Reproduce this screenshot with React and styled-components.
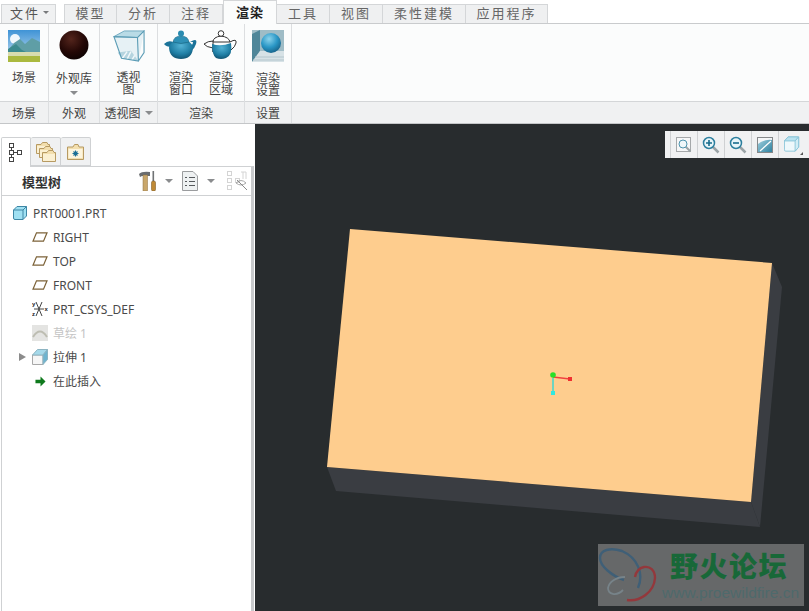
import React from 'react';
import styled, { createGlobalStyle } from 'styled-components';

const GlobalStyle = createGlobalStyle`
  html, body { margin: 0; padding: 0; background: #fff; overflow: hidden; }
  body { font-family: "Noto Sans CJK SC", "Liberation Sans", sans-serif; font-size: 12px; color: #444; }
`;

const Page = styled.div`
  width: 809px;
  height: 611px;
  display: flex;
  flex-direction: column;
  overflow: hidden;
`;

const TabBar = styled.div`
  height: 24px;
  box-sizing: border-box;
  display: flex;
  align-items: flex-end;
  padding-left: 1px;
  background: #fff;
  border-bottom: 1px solid #c9cbcd;
`;

const FileButton = styled.div`
  width: 55px;
  height: 19px;
  box-sizing: border-box;
  margin-right: 8px;
  padding: 0 0 3px 2px;
  background: #f0f1f2;
  border: 1px solid #d4d6d8;
  border-bottom: none;
  display: flex;
  align-items: center;
  justify-content: center;
  gap: 3px;
  font-size: 13px;
  letter-spacing: 2px;
  color: #555;
`;

const FileCaret = styled.span`
  width: 0;
  height: 0;
  border-left: 3px solid transparent;
  border-right: 3px solid transparent;
  border-top: 3px solid #77797b;
`;

const Tab = styled.div`
  width: ${p => p.$w || 53}px;
  height: ${p => (p.$active ? 24 : 19)}px;
  box-sizing: border-box;
  margin-bottom: ${p => (p.$active ? -1 : 0)}px;
  padding-bottom: ${p => (p.$active ? 2 : 3)}px;
  display: flex;
  align-items: center;
  justify-content: center;
  font-size: 13px;
  letter-spacing: ${p => (p.$active ? 1 : 2)}px;
  font-weight: ${p => (p.$active ? 700 : 400)};
  color: ${p => (p.$active ? '#222' : '#666')};
  background: ${p => (p.$active ? '#fbfcfc' : '#eff0f1')};
  border: 1px solid #d4d6d8;
  border-left: ${p => (p.$first || p.$active ? '1px solid #d4d6d8' : 'none')};
  border-bottom: none;
`;

const Ribbon = styled.div`
  height: 100px;
  box-sizing: border-box;
  display: flex;
  background: #fbfcfc;
  border-bottom: 1px solid #c4c6c8;
`;

const Group = styled.div`
  width: ${p => (p.$w ? `${p.$w}px` : 'auto')};
  flex: ${p => (p.$w ? 'none' : 1)};
  box-sizing: border-box;
  display: flex;
  flex-direction: column;
  border-right: ${p => (p.$w ? '1px solid #dcdee0' : 'none')};
`;

const GroupBody = styled.div`
  height: 77px;
  display: flex;
  justify-content: center;
`;

const GroupLabel = styled.div`
  height: 22px;
  box-sizing: border-box;
  background: #f0f1f2;
  border-top: 1px solid #d4d6d8;
  display: flex;
  align-items: center;
  justify-content: center;
  gap: 4px;
  color: #444;
  font-size: 12px;
`;

const ToolButton = styled.div`
  width: ${p => p.$w || 40}px;
  display: flex;
  flex-direction: column;
  align-items: center;
  padding-top: 6px;
`;

const ToolText = styled.div`
  margin-top: ${p => p.$mt || 8}px;
  font-size: 12px;
  line-height: 12px;
  text-align: center;
  color: #444;
  white-space: pre-line;
`;

const Caret = styled.span`
  display: inline-block;
  flex: none;
  width: 0;
  height: 0;
  margin-top: ${p => p.$mt || 0}px;
  margin-left: ${p => p.$ml || 0}px;
  margin-right: ${p => p.$mr || 0}px;
  border-left: 4px solid transparent;
  border-right: 4px solid transparent;
  border-top: 4px solid #8a8c8e;
`;

const Main = styled.div`
  flex: 1;
  display: flex;
  min-height: 0;
`;

const Sidebar = styled.div`
  width: 255px;
  flex: none;
  box-sizing: border-box;
  background: #fff;
  padding: 13px 1px 0 1px;
  display: flex;
  flex-direction: column;
`;

const PanelTabs = styled.div`
  height: 29px;
  display: flex;
`;

const PanelTab = styled.div`
  width: 30px;
  height: ${p => (p.$active ? 30 : 29)}px;
  box-sizing: border-box;
  background: ${p => (p.$active ? '#fff' : '#f0f1f2')};
  border: 1px solid #cfd1d3;
  border-left: ${p => (p.$active ? '1px solid #cfd1d3' : 'none')};
  border-bottom: ${p => (p.$active ? 'none' : '1px solid #cfd1d3')};
  border-radius: 2px 2px 0 0;
  position: relative;
  z-index: ${p => (p.$active ? 1 : 0)};
  display: flex;
  align-items: center;
  justify-content: center;
`;

const Panel = styled.div`
  flex: 1;
  border: 1px solid #cfd1d3;
  border-bottom: none;
  border-right: 3px solid #c8cacc;
  display: flex;
  flex-direction: column;
`;

const TreeHeader = styled.div`
  height: 29px;
  box-sizing: border-box;
  display: flex;
  align-items: center;
  padding-left: 20px;
  border-bottom: 1px solid #cfd1d3;
`;

const TreeTitle = styled.div`
  font-size: 13px;
  font-weight: 700;
  color: #333;
  width: 117px;
`;

const HeaderTools = styled.div`
  display: flex;
  align-items: center;
`;

const TreeList = styled.div`
  padding-top: 5px;
  display: flex;
  flex-direction: column;
`;

const TreeRow = styled.div`
  height: 24px;
  display: flex;
  align-items: center;
  padding-left: ${p => p.$indent}px;
  font-family: "Noto Sans", "Noto Sans CJK SC", sans-serif;
  font-size: 12px;
  color: ${p => (p.$muted ? '#c4c4c4' : '#4a4a4a')};
`;

const IconSlot = styled.span`
  width: 16px;
  height: 16px;
  flex: none;
  margin-right: 5px;
  display: flex;
  align-items: center;
  justify-content: center;
`;

const ExpanderSlot = styled.span`
  width: 15px;
  margin-left: -15px;
  flex: none;
`;

const Expander = styled.span`
  display: block;
  width: 0;
  height: 0;
  margin-left: 2px;
  border-top: 4px solid transparent;
  border-bottom: 4px solid transparent;
  border-left: 7px solid #8b8b8b;
`;

const Viewport = styled.div`
  flex: 1;
  position: relative;
  background: #282c2e;
  overflow: hidden;
`;

const ModelSvg = styled.svg`
  display: block;
  width: 100%;
  height: 100%;
`;

const ViewToolbar = styled.div`
  position: absolute;
  top: 7px;
  right: 0;
  width: 144px;
  height: 27px;
  box-sizing: border-box;
  display: flex;
  background: #f0f1f2;
  padding-left: 5px;
`;

const ViewTool = styled.div`
  width: ${p => p.$w || 27}px;
  height: 27px;
  box-sizing: border-box;
  padding-right: ${p => p.$pr || 0}px;
  border-left: 1px solid #cfd1d3;
  display: flex;
  align-items: center;
  justify-content: center;
  position: relative;
`;

const CornerMark = styled.span`
  position: absolute;
  right: 6px;
  bottom: 3px;
  width: 0;
  height: 0;
  border-left: 3px solid transparent;
  border-bottom: 3px solid #555;
`;

const Watermark = styled.div`
  position: absolute;
  left: 343px;
  top: 420px;
  width: 206px;
  height: 62px;
  background: #666869;
  display: flex;
`;

const MarkLogo = styled.svg`
  width: 62px;
  height: 62px;
  flex: none;
`;

const MarkText = styled.div`
  display: flex;
  flex-direction: column;
  align-items: flex-end;
  flex: 1;
  padding-right: 5px;
`;

const MarkTitle = styled.div`
  font-size: 28px;
  line-height: 30px;
  margin-top: 6px;
  margin-right: 11px;
  font-weight: 900;
  letter-spacing: 1.5px;
  color: #186838;
  white-space: nowrap;
`;

const MarkUrl = styled.div`
  font-family: "Liberation Sans", sans-serif;
  font-size: 15.5px;
  line-height: 18px;
  margin-top: 4px;
  color: #4e6a6c;
  white-space: nowrap;
`;

const SceneIcon = () => (
  <svg width="32" height="32" viewBox="0 0 32 32">
    <defs>
      <linearGradient id="sky" x1="0" y1="0" x2="0" y2="1">
        <stop offset="0" stopColor="#3f93d6" />
        <stop offset="1" stopColor="#cfe6f2" />
      </linearGradient>
    </defs>
    <rect width="32" height="32" fill="url(#sky)" />
    <circle cx="7" cy="9" r="5" fill="#fff" opacity="0.9" />
    <path d="M0 20 L6 13 L12 9 L17 14 L24 8 L32 12 V23 H0Z" fill="#5f9ea6" />
    <path d="M0 19 L8 14 L14 20 L20 23 H0Z" fill="#3c8a8e" />
    <rect y="22" width="32" height="5" fill="#d8dcae" />
    <rect y="26" width="32" height="6" fill="#aab93f" />
  </svg>
);

const AppearanceIcon = () => (
  <svg width="30" height="30" viewBox="0 0 30 30">
    <defs>
      <radialGradient id="ball" cx="0.4" cy="0.3" r="0.75">
        <stop offset="0" stopColor="#54251c" />
        <stop offset="0.6" stopColor="#240806" />
        <stop offset="1" stopColor="#0c0202" />
      </radialGradient>
    </defs>
    <circle cx="15" cy="15" r="14.5" fill="url(#ball)" />
  </svg>
);

const PerspectiveIcon = () => (
  <svg width="32" height="32" viewBox="0 0 34 34">
    <path d="M1 7 L12 1 L33 1 L27 33 L9 30Z" fill="#e6f1f5" />
    <path d="M1 7 L26 8 L33 1 L12 1Z" fill="#b9dbe6" stroke="#6fa9bf" strokeWidth="1" />
    <path d="M5 24 L19 22 L27 33 L9 30Z" fill="#b5d4df" />
    <path d="M10 30 L15 23 M15 31 L19 23 M20 32 L23 27" stroke="#f2f8fa" strokeWidth="1.5" />
    <path d="M1 7 L26 8 L27 33 L9 30Z M26 8 L33 1 L33 24 L27 33" fill="none" stroke="#5c9db6" strokeWidth="1.2" />
  </svg>
);

const TeapotIcon = ({ half }) => (
  <svg width="34" height="30" viewBox="0 0 34 30">
    <defs>
      <radialGradient id="pot" cx="0.5" cy="0.3" r="0.75">
        <stop offset="0" stopColor="#53b2d4" />
        <stop offset="0.6" stopColor="#1f7ea4" />
        <stop offset="1" stopColor="#0e4c69" />
      </radialGradient>
    </defs>
    {half ? (
      <g>
        <path d="M9 18 Q2 17 0 14 Q4 11 9 11 L9 22Z M26 12 Q33 8 32 13 Q31 17 27 20" fill="#fff" stroke="#333" strokeWidth="1" />
        <path d="M9 12 Q9 7 17 6 Q25 7 26 12Z" fill="#fff" stroke="#333" strokeWidth="1" />
        <circle cx="17" cy="3.5" r="2.8" fill="#fff" stroke="#333" strokeWidth="1" />
        <path d="M8 14 Q17 17 27 13 Q29 25 22 28 Q17 30 12 28 Q8 25 8 14Z" fill="url(#pot)" />
      </g>
    ) : (
      <g>
        <path d="M8 17 Q2 17 0 14 Q4 10 9 12Z M26 12 Q34 7 32 14 Q31 18 27 21 L25 18 Q29 15 29 12Z" fill="#1b7399" />
        <path d="M5 18 Q6 10 17 10 Q28 10 29 18 Q28 29 17 29 Q6 29 5 18Z" fill="url(#pot)" />
        <path d="M9 12 Q10 6 17 6 Q24 6 25 12 Q17 15 9 12Z" fill="#2e90b6" stroke="#125873" strokeWidth="0.5" />
        <circle cx="17" cy="3.5" r="3" fill="#2a8bb0" />
      </g>
    )}
  </svg>
);

const RenderSetIcon = () => (
  <svg width="32" height="32" viewBox="0 0 32 32">
    <defs>
      <radialGradient id="sph" cx="0.4" cy="0.3" r="0.75">
        <stop offset="0" stopColor="#8bd3ec" />
        <stop offset="0.55" stopColor="#2a97c6" />
        <stop offset="1" stopColor="#155f85" />
      </radialGradient>
    </defs>
    <rect width="32" height="32" fill="#9fbcc6" />
    <path d="M0 4 L8 0 V21 L0 32Z" fill="#4f8699" />
    <path d="M0 32 L8 21 H32 V32Z" fill="#d7e2e6" />
    <path d="M3 27 H32 M1 30 H32" stroke="#b4c6cd" strokeWidth="1" />
    <circle cx="19" cy="13" r="10" fill="url(#sph)" />
  </svg>
);

const TreeTabIcon = () => (
  <svg width="14" height="20" viewBox="0 0 14 20" fill="#fff" stroke="#444" strokeWidth="1">
    <rect x="0.5" y="0.5" width="4" height="4" />
    <rect x="0.5" y="7.5" width="4" height="4" />
    <rect x="8.5" y="7.5" width="4" height="4" />
    <rect x="0.5" y="14.5" width="4" height="4" />
    <path d="M2.5 5 V7 M2.5 12 V14 M5 9.5 H8" fill="none" />
  </svg>
);

const FolderIcon = ({ x, y }) => (
  <g transform={`translate(${x} ${y})`}>
    <path d="M0.5 2.5 H5 L6.5 0.5 H11 L12 2.5 H13.5 V11.5 H0.5Z" fill="#f3dfae" stroke="#b79a62" />
    <rect x="1" y="4" width="12" height="7" fill="#fbf0d2" />
  </g>
);

const FoldersTabIcon = () => (
  <svg width="20" height="20" viewBox="0 0 20 20">
    <FolderIcon x={0} y={0} />
    <FolderIcon x={3} y={4} />
    <FolderIcon x={6} y={8} />
  </svg>
);

const StarFolderIcon = () => (
  <svg width="18" height="16" viewBox="0 0 18 16">
    <path d="M0.5 3 H6 L7.5 0.5 H11 L12 3 H16.5 V15.5 H0.5Z" fill="#f3dfae" stroke="#b79a62" />
    <rect x="1.5" y="5" width="14" height="9" fill="#fdf5de" />
    <path d="M8.5 6.5 V12.5 M5.5 9.5 H11.5 M6.5 7.5 L10.5 11.5 M10.5 7.5 L6.5 11.5" stroke="#1c6f95" strokeWidth="1.1" />
  </svg>
);

const ToolsIcon = () => (
  <svg width="18" height="20" viewBox="0 0 18 20">
    <path d="M0 3 Q3 0 11 1 V5 H3 L1 6Z" fill="#6a6d70" />
    <rect x="4" y="4" width="4.5" height="16" fill="#c9a76b" stroke="#8d7140" strokeWidth="0.5" />
    <rect x="13.5" y="0" width="1.6" height="10" fill="#707375" />
    <rect x="12.5" y="10" width="4" height="10" rx="1.5" fill="#c08a35" stroke="#6e4c18" strokeWidth="0.5" />
  </svg>
);

const SettingsListIcon = () => (
  <svg width="16" height="20" viewBox="0 0 16 20">
    <path d="M0.5 0.5 H11 L15.5 5 V19.5 H0.5Z" fill="#eef1f2" stroke="#9a9c9e" />
    <path d="M3 6.5 H5 M7 6.5 H13 M3 10.5 H5 M7 10.5 H13 M3 14.5 H5 M7 14.5 H13" stroke="#55595c" />
  </svg>
);

const HiddenTreeIcon = () => (
  <svg width="22" height="20" viewBox="0 0 22 20" fill="none" stroke="#d4d4d4">
    <rect x="0.5" y="0.5" width="4" height="4" />
    <rect x="0.5" y="7.5" width="4" height="4" />
    <rect x="8.5" y="7.5" width="4" height="4" />
    <rect x="0.5" y="14.5" width="4" height="4" />
    <path d="M14 1 H19 M16 1 V8 M19 1 V8" />
    <path d="M9 12 Q14 7 19 12 Q14 16 9 12Z" stroke="#a8a8a8" />
    <path d="M10 9 L20 19" stroke="#8a8a8a" />
  </svg>
);

const PartIcon = () => (
  <svg width="14" height="14" viewBox="0 0 14 14">
    <path d="M0.5 4 L4 0.5 H13.5 V10 L10 13.5 H2 Q0.5 13.5 0.5 12Z" fill="#9fe0f2" stroke="#3e86a5" />
    <path d="M0.5 4 H10 V13.5 M10 4 L13.5 0.5" fill="none" stroke="#3e86a5" />
  </svg>
);

const PlaneIcon = () => (
  <svg width="16" height="10" viewBox="0 0 16 10">
    <path d="M4.5 0.8 H15 L11.5 9.2 H1Z" fill="none" stroke="#7c6238" strokeWidth="1.2" />
  </svg>
);

const CsysIcon = () => (
  <svg width="16" height="16" viewBox="0 0 16 16" fill="none" stroke="#444" strokeWidth="1">
    <path d="M4 1 L10 15 M10 1 L4 15 M2 8 H12" />
    <text x="0" y="5" fontSize="6" fontFamily="Liberation Sans" fontWeight="700" fill="#222" stroke="none">y</text>
    <text x="0" y="15" fontSize="6" fontFamily="Liberation Sans" fontWeight="700" fill="#222" stroke="none">z</text>
    <text x="12.5" y="10" fontSize="6" fontFamily="Liberation Sans" fontWeight="700" fill="#222" stroke="none">x</text>
  </svg>
);

const SketchIcon = () => (
  <svg width="16" height="16" viewBox="0 0 16 16">
    <rect width="16" height="16" fill="#e4e4e2" />
    <path d="M1 12 Q8 1 15 12" fill="none" stroke="#bdbdb2" strokeWidth="2" />
  </svg>
);

const ExtrudeIcon = () => (
  <svg width="16" height="16" viewBox="0 0 16 16">
    <path d="M0.5 6 H11 V15.5 H0.5Z" fill="#f6f6f6" stroke="#a8a8a8" />
    <path d="M0.5 6 L5.5 0.5 H15.5 L11 6Z" fill="#a5d9ea" stroke="#8db4c2" />
    <path d="M11 6 L15.5 0.5 V10.5 L11 15.5Z" fill="#6fb4cf" stroke="#8db4c2" />
  </svg>
);

const InsertIcon = () => (
  <svg width="11" height="11" viewBox="0 0 12 12">
    <path d="M0.5 4 H6 V0.5 L11.5 6 L6 11.5 V8 H0.5Z" fill="#0f7a1d" />
  </svg>
);

const MagnifierIcon = ({ sign }) => (
  <svg width="18" height="18" viewBox="0 0 18 18">
    <path d="M10.5 10.5 L16.5 16.5" stroke="#9aa3a6" strokeWidth="2.5" />
    <circle cx="7" cy="7" r="5.5" fill="#e8f5f9" stroke="#2c7f9e" strokeWidth="1.5" />
    <path d={sign === '+' ? 'M4 7 H10 M7 4 V10' : 'M4 7 H10'} stroke="#176c8c" strokeWidth="1.6" />
  </svg>
);

const ZoomFrameIcon = () => (
  <svg width="16" height="16" viewBox="0 0 16 16">
    <rect x="0.5" y="0.5" width="14" height="14" fill="#f6f7f8" stroke="#a5a8aa" />
    <path d="M9.5 9.5 L14.5 14.5" stroke="#9aa3a6" strokeWidth="2" />
    <circle cx="7" cy="7" r="4" fill="#eef7fa" stroke="#4d93ae" />
  </svg>
);

const ShadeIcon = () => (
  <svg width="16" height="16" viewBox="0 0 16 16">
    <defs>
      <linearGradient id="shade" x1="0" y1="0" x2="1" y2="1">
        <stop offset="0" stopColor="#a9d6e4" />
        <stop offset="1" stopColor="#2b7f9d" />
      </linearGradient>
    </defs>
    <rect x="0.5" y="0.5" width="15" height="15" fill="url(#shade)" stroke="#85888a" />
    <path d="M1 1 H15 V3 Q7 2 1 7Z" fill="#f4f6f7" />
    <path d="M3 14 L14 4" stroke="#fff" strokeWidth="1.2" />
  </svg>
);

const ViewCubeIcon = () => (
  <svg width="16" height="17" viewBox="0 0 18 18">
    <path d="M0.5 5 L4.5 0.5 H16.5 V12 L12.5 16.5 H2 Q0.5 16.5 0.5 15Z" fill="#eef8fb" stroke="#86c3d8" />
    <path d="M0.5 5 L4.5 0.5 H16.5 L12.5 5Z" fill="#b8e2ef" stroke="#86c3d8" />
    <path d="M12.5 5 L16.5 0.5 V12 L12.5 16.5Z" fill="#d2edf5" stroke="#86c3d8" />
  </svg>
);

const treeItems = [
  { label: 'RIGHT', icon: <PlaneIcon /> },
  { label: 'TOP', icon: <PlaneIcon /> },
  { label: 'FRONT', icon: <PlaneIcon /> },
  { label: 'PRT_CSYS_DEF', icon: <CsysIcon /> },
  { label: '草绘 1', icon: <SketchIcon />, muted: true },
  { label: '拉伸 1', icon: <ExtrudeIcon />, expand: true },
  { label: '在此插入', icon: <InsertIcon /> },
];

function App() {
  return (
    <Page>
      <GlobalStyle />
      <TabBar>
        <FileButton>文件<FileCaret /></FileButton>
        <Tab $first>模型</Tab>
        <Tab>分析</Tab>
        <Tab>注释</Tab>
        <Tab $active $w={54}>渲染</Tab>
        <Tab>工具</Tab>
        <Tab>视图</Tab>
        <Tab $w={83}>柔性建模</Tab>
        <Tab $w={82}>应用程序</Tab>
      </TabBar>
      <Ribbon>
        <Group $w={49}>
          <GroupBody>
            <ToolButton><SceneIcon /><ToolText $mt={9}>场景</ToolText></ToolButton>
          </GroupBody>
          <GroupLabel>场景</GroupLabel>
        </Group>
        <Group $w={51}>
          <GroupBody>
            <ToolButton $w={50}>
              <AppearanceIcon />
              <ToolText $mt={12}>外观库</ToolText>
              <Caret $mt={7} />
            </ToolButton>
          </GroupBody>
          <GroupLabel>外观</GroupLabel>
        </Group>
        <Group $w={58}>
          <GroupBody>
            <ToolButton><PerspectiveIcon /><ToolText $mt={9}>{'透视\n图'}</ToolText></ToolButton>
          </GroupBody>
          <GroupLabel>透视图<Caret /></GroupLabel>
        </Group>
        <Group $w={87}>
          <GroupBody>
            <ToolButton><TeapotIcon /><ToolText $mt={11}>{'渲染\n窗口'}</ToolText></ToolButton>
            <ToolButton><TeapotIcon half /><ToolText $mt={11}>{'渲染\n区域'}</ToolText></ToolButton>
          </GroupBody>
          <GroupLabel>渲染</GroupLabel>
        </Group>
        <Group $w={47}>
          <GroupBody>
            <ToolButton><RenderSetIcon /><ToolText $mt={10}>{'渲染\n设置'}</ToolText></ToolButton>
          </GroupBody>
          <GroupLabel>设置</GroupLabel>
        </Group>
        <Group>
          <GroupBody />
          <GroupLabel />
        </Group>
      </Ribbon>
      <Main>
        <Sidebar>
          <PanelTabs>
            <PanelTab $active><TreeTabIcon /></PanelTab>
            <PanelTab><FoldersTabIcon /></PanelTab>
            <PanelTab><StarFolderIcon /></PanelTab>
          </PanelTabs>
          <Panel>
            <TreeHeader>
              <TreeTitle>模型树</TreeTitle>
              <HeaderTools>
                <ToolsIcon />
                <Caret $ml={8} $mr={9} />
                <SettingsListIcon />
                <Caret $ml={9} $mr={12} />
                <HiddenTreeIcon />
              </HeaderTools>
            </TreeHeader>
            <TreeList>
              <TreeRow $indent={10}><IconSlot><PartIcon /></IconSlot><span>PRT0001.PRT</span></TreeRow>
              {treeItems.map(item => (
                <TreeRow key={item.label} $indent={30} $muted={item.muted}>
                  {item.expand && <ExpanderSlot><Expander /></ExpanderSlot>}
                  <IconSlot>{item.icon}</IconSlot>
                  <span>{item.label}</span>
                </TreeRow>
              ))}
            </TreeList>
          </Panel>
        </Sidebar>
        <Viewport>
          <ModelSvg viewBox="0 0 554 487">
            <path d="M517 139 L527 163 L505 403 L496 378Z" fill="#3a3d42" />
            <path d="M72 343 L496 378 L505 403 L81 367Z" fill="#3a3d42" />
            <path d="M95 105 L517 139 L496 378 L72 343Z" fill="#fecd8e" />
            <path d="M298 254 V268" stroke="#3fd6d0" strokeWidth="1.5" />
            <path d="M298 253 L315 255" stroke="#f04040" strokeWidth="1.5" />
            <rect x="313" y="253" width="4" height="4" fill="#f03030" />
            <rect x="296" y="267" width="4" height="4" fill="#30e8e0" />
            <circle cx="298" cy="251" r="2.8" fill="#28e028" />
          </ModelSvg>
          <ViewToolbar>
            <ViewTool><ZoomFrameIcon /></ViewTool>
            <ViewTool><MagnifierIcon sign="+" /></ViewTool>
            <ViewTool><MagnifierIcon sign="-" /></ViewTool>
            <ViewTool><ShadeIcon /></ViewTool>
            <ViewTool $w={31} $pr={4}><ViewCubeIcon /><CornerMark /></ViewTool>
          </ViewToolbar>
          <Watermark>
            <MarkLogo viewBox="0 0 62 62" fill="none">
              <path d="M40 44 C46 30 40 14 24 7 C12 3 2 6 2 14 C2 22 14 32 26 36" stroke="#3f5f77" strokeWidth="2.4" />
              <path d="M29 56 C42 58 56 48 57 34 C57 26 52 22 46 23 C41 24 38 28 37 33" stroke="#93383c" strokeWidth="2.4" />
              <path d="M27 33 C18 33 11 38 10 44 C10 50 18 53 25 46" stroke="#778389" strokeWidth="1.8" />
            </MarkLogo>
            <MarkText>
              <MarkTitle>野火论坛</MarkTitle>
              <MarkUrl>www.proewildfire.cn</MarkUrl>
            </MarkText>
          </Watermark>
        </Viewport>
      </Main>
    </Page>
  );
}

export default App;
